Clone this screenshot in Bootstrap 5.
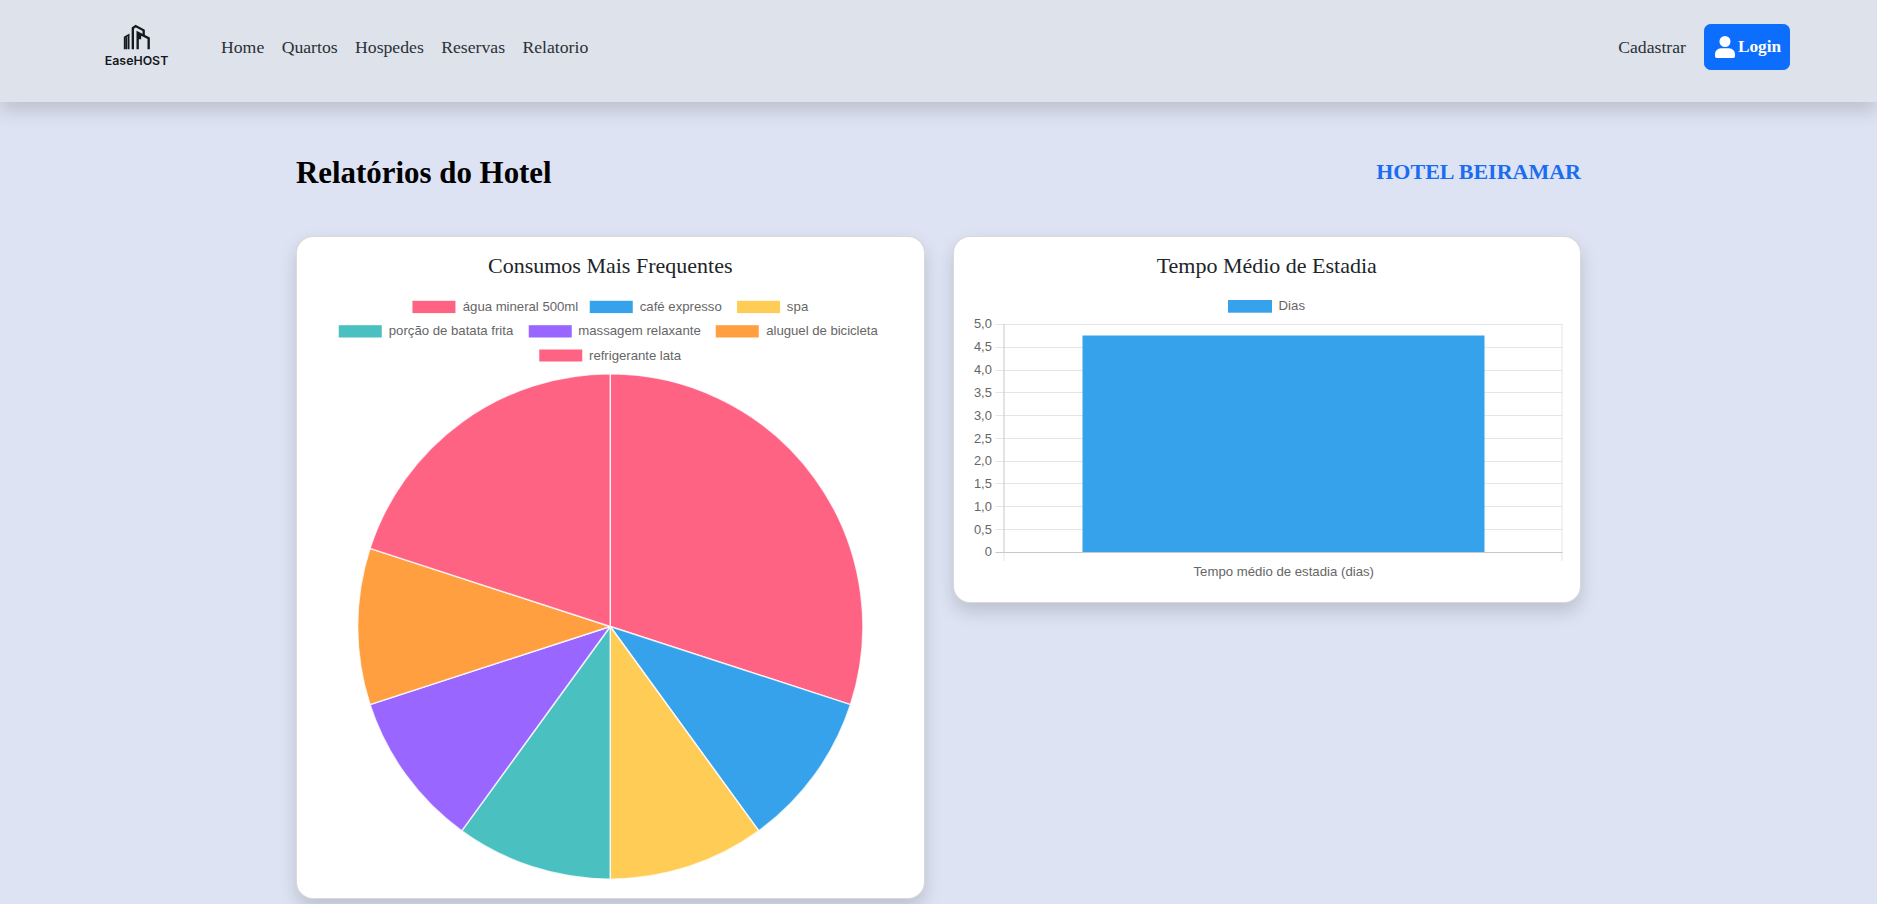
<!DOCTYPE html>
<html lang="pt-br">
<head>
<meta charset="utf-8">
<meta name="viewport" content="width=device-width, initial-scale=1">
<title>EaseHOST - Relatórios</title>
<link href="https://cdn.jsdelivr.net/npm/bootstrap@5.3.0/dist/css/bootstrap.min.css" rel="stylesheet">
<style>
body{background:#dde3f3;font-family:"Liberation Serif","Times New Roman",serif;font-size:17.2px;color:#212529}
.topbar{height:102px;background:#dee2ea;box-shadow:0 8.6px 17.2px rgba(0,0,0,.15);padding:24px 87px 0 96px}
.topbar .nav-link{color:#2b3036;padding:0;line-height:26px;font-size:17.7px}
.menu-links{gap:17.4px;margin-left:45px}
.account-links{gap:18px}
.brand-logo{width:80px;height:46px}
.login-btn{width:86px;height:46px;border-radius:6.5px;font-size:17.2px;padding:0 8px 0 10px}
.report{max-width:1285px;height:802px}
.report-head{height:134px;padding-top:7px}
.report-head h1{font-size:30.9px;color:#000}
.report-head h2{font-size:22px;color:#1a6df0}
.chart-grid{gap:28px}
.chart-card{width:628.5px;border-radius:17px;border-color:rgba(0,0,0,.15);box-shadow:0 8.6px 17.2px rgba(0,0,0,.15)}
.chart-card .card-body{padding:17px}
.chart-card h5{font-size:22px;line-height:26px;margin:-1px 0 15px}
.chart-card svg{font-family:"Liberation Sans",Arial,sans-serif;font-size:12.9px;fill:#666;overflow:visible}
.chart-card svg text[textLength]{font-size:13.2px}
</style>
</head>
<body class="overflow-hidden">
<nav class="topbar d-flex align-items-start justify-content-between">
  <div class="d-flex align-items-center">
    <svg class="brand-logo" viewBox="96 24 80 46" aria-label="EaseHOST">
      <g transform="translate(80 0) scale(.33333)" fill="none" stroke="#15181c" stroke-width="7" stroke-linejoin="miter">
        <path d="M134 148V112L146 105V148M139.500 148V112" stroke-width="5"/>
        <path d="M158.500 148V84L167 78L191 91V105"/>
        <path d="M173 148V98L206 115V148M180 104V118"/>
      </g>
      <text x="104.800" y="65" textLength="63.500" lengthAdjust="spacingAndGlyphs" font-family="Inter, sans-serif" font-size="12" font-weight="600" fill="#15181c">EaseHOST</text>
    </svg>
    <div class="menu-links nav">
      <a class="nav-link" href="#">Home</a>
      <a class="nav-link" href="#">Quartos</a>
      <a class="nav-link" href="#">Hospedes</a>
      <a class="nav-link" href="#">Reservas</a>
      <a class="nav-link" href="#">Relatorio</a>
    </div>
  </div>
  <div class="account-links d-flex align-items-center">
    <a class="nav-link" href="#">Cadastrar</a>
    <a class="login-btn btn btn-primary fw-bold d-flex align-items-center justify-content-between" href="#">
      <svg width="20" height="22" viewBox="0 0 20 22" fill="#fff"><circle cx="10" cy="5.500" r="5.500"/><path d="M6.200 12.300H13.800A6 6 0 0 1 20 18.500V20.200A1.800 1.800 0 0 1 18.200 22H1.800A1.800 1.800 0 0 1 0 20.200V18.500A6 6 0 0 1 6.200 12.300Z"/></svg>
      <span>Login</span>
    </a>
  </div>
</nav>
<main class="report mx-auto">
  <header class="report-head d-flex align-items-center justify-content-between">
    <h1 class="fw-bold m-0">Relatórios do Hotel</h1>
    <h2 class="fw-bold m-0">HOTEL BEIRAMAR</h2>
  </header>
  <div class="chart-grid d-flex align-items-start">
    <section class="chart-card card">
      <div class="card-body">
        <h5 class="text-center fw-normal">Consumos Mais Frequentes</h5>
        <svg class="d-block w-100" viewBox="314.250 294.500 592.500 586.500">
          <g>
            <rect x="412.700" y="301.300" width="43" height="12.300" fill="#ff6384"/><text x="463" y="311" textLength="115.500">água mineral 500ml</text>
            <rect x="590" y="301.300" width="43" height="12.300" fill="#36a2eb"/><text x="640" y="311" textLength="82">café expresso</text>
            <rect x="737.300" y="301.300" width="43" height="12.300" fill="#ffcd56"/><text x="787" y="311" textLength="21.500">spa</text>
            <rect x="339" y="325.700" width="43" height="12.300" fill="#4bc0c0"/><text x="389" y="335" textLength="124.500">porção de batata frita</text>
            <rect x="529" y="325.700" width="43" height="12.300" fill="#9966ff"/><text x="578.500" y="335" textLength="122.500">massagem relaxante</text>
            <rect x="716" y="325.700" width="43" height="12.300" fill="#ff9f40"/><text x="766.500" y="335" textLength="111.500">aluguel de bicicleta</text>
            <rect x="539.500" y="350" width="43" height="12" fill="#ff6384"/><text x="589.300" y="360" textLength="92">refrigerante lata</text>
          </g>
          <g stroke="#fff" stroke-opacity=".8" stroke-width="1.500" stroke-linejoin="round">
            <path fill="#ff6384" d="M610.500 627V374.300A252.700 252.700 0 0 1 850.800 705.100Z"/>
            <path fill="#36a2eb" d="M610.500 627L850.800 705.100A252.700 252.700 0 0 1 759 831.400Z"/>
            <path fill="#ffcd56" d="M610.500 627L759 831.400A252.700 252.700 0 0 1 610.500 879.700Z"/>
            <path fill="#4bc0c0" d="M610.500 627V879.700A252.700 252.700 0 0 1 462 831.400Z"/>
            <path fill="#9966ff" d="M610.500 627L462 831.400A252.700 252.700 0 0 1 370.200 705.100Z"/>
            <path fill="#ff9f40" d="M610.500 627L370.200 705.100A252.700 252.700 0 0 1 370.200 548.900Z"/>
            <path fill="#ff6384" d="M610.500 627L370.200 548.900A252.700 252.700 0 0 1 610.500 374.300Z"/>
          </g>
        </svg>
      </div>
    </section>
    <section class="chart-card card">
      <div class="card-body">
        <h5 class="text-center fw-normal">Tempo Médio de Estadia</h5>
        <svg class="d-block w-100" viewBox="970.500 295 592.500 291">
          <rect x="1227.500" y="301" width="44" height="12.700" fill="#36a2eb"/><text x="1278" y="311" textLength="26.500">Dias</text>
          <path fill="none" stroke="#e5e5e5" d="M995 325.500H1562M995 348.500H1562M995 371.500H1562M995 393.500H1562M995 416.500H1562M995 439.500H1562M995 462.500H1562M995 484.500H1562M995 507.500H1562M995 530.500H1562M1561.500 325V562M1003.500 553V562"/>
          <path fill="none" stroke="#c8c8c8" d="M1003.500 325V553M995 553.500H1562"/>
          <rect x="1082" y="336.500" width="402" height="216.500" fill="#36a2eb"/>
          <g text-anchor="end">
            <text x="991.300" y="329">5,0</text><text x="991.300" y="352">4,5</text><text x="991.300" y="375">4,0</text><text x="991.300" y="398">3,5</text><text x="991.300" y="420.500">3,0</text><text x="991.300" y="443.500">2,5</text><text x="991.300" y="466">2,0</text><text x="991.300" y="489">1,5</text><text x="991.300" y="512">1,0</text><text x="991.300" y="534.500">0,5</text><text x="991.300" y="557">0</text>
          </g>
          <text x="1193" y="577" textLength="180.500">Tempo médio de estadia (dias)</text>
        </svg>
      </div>
    </section>
  </div>
</main>
<script src="https://cdn.jsdelivr.net/npm/bootstrap@5.3.0/dist/js/bootstrap.bundle.min.js"></script>
</body>
</html>
